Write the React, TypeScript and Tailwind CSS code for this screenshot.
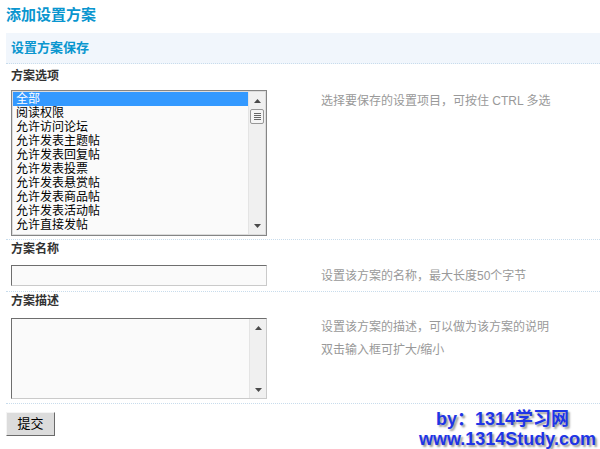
const options = [
  '全部',
  '阅读权限',
  '允许访问论坛',
  '允许发表主题帖',
  '允许发表回复帖',
  '允许发表投票',
  '允许发表悬赏帖',
  '允许发表商品帖',
  '允许发表活动帖',
  '允许直接发帖',
];

function UpArrow() {
  return (
    <svg width="7" height="4" viewBox="0 0 7 4">
      <path d="M0 4L3.5 0L7 4Z" fill="#4a4a4a" />
    </svg>
  );
}

function DownArrow() {
  return (
    <svg width="7" height="4" viewBox="0 0 7 4">
      <path d="M0 0L3.5 4L7 0Z" fill="#4a4a4a" />
    </svg>
  );
}

function ScrollBar({ thumb }: { thumb?: boolean }) {
  return (
    <div className="flex h-full w-[17px] shrink-0 flex-col border-l border-[#e4e4e4] bg-[#f0f0f0]">
      <div className="flex h-[17px] items-center justify-center">
        <UpArrow />
      </div>
      {thumb && (
        <div className="mx-px flex h-[15px] flex-col items-center justify-center gap-px rounded-[2px] border border-[#979797] bg-[#f5f5f5]">
          <div className="h-px w-[7px] bg-[#666]" />
          <div className="h-px w-[7px] bg-[#666]" />
          <div className="h-px w-[7px] bg-[#666]" />
          <div className="h-px w-[7px] bg-[#666]" />
        </div>
      )}
      <div className="flex-1" />
      <div className="flex h-[17px] items-center justify-center">
        <DownArrow />
      </div>
    </div>
  );
}

export default function App() {
  return (
    <div className="h-[449px] w-[600px] overflow-hidden bg-white font-['Liberation_Sans','Noto_Sans_CJK_SC',sans-serif] text-[12px] text-[#333]">
      <h1 className="h-[33px] pl-[6px] pt-[6px] text-[15px] font-bold leading-[18px] text-[#0a96cf]">添加设置方案</h1>

      <div className="ml-[6px]">
        <div className="h-[31px] border-b border-dotted border-[#c8dcec] bg-[#f1f6fc] pl-[5px] pt-[7px] text-[13px] font-bold leading-[15px] text-[#0a96cf]">
          设置方案保存
        </div>

        {/* 方案选项 */}
        <div className="border-b border-dotted border-[#c8dcec] pb-[3px]">
          <div className="pl-[5px] pt-[5px] font-bold leading-[14px]">方案选项</div>
          <div className="mt-[7px] flex">
            <div className="w-[315px] pl-[5px]">
              <div className="flex h-[146px] w-[256px] border border-[#858585] bg-[#dcdcdc] p-px">
                <div className="flex-1 overflow-hidden bg-[#fafafa] leading-[14px] text-black">
                  {options.map((o, i) => (
                    <div key={o} className={i === 0 ? 'bg-[#3399ff] pl-[3px] text-white' : 'pl-[3px]'}>
                      {o}
                    </div>
                  ))}
                </div>
                <ScrollBar thumb />
              </div>
            </div>
            <p className="leading-[22px] text-[#999]">选择要保存的设置项目，可按住 CTRL 多选</p>
          </div>
        </div>

        {/* 方案名称 */}
        <div className="border-b border-dotted border-[#c8dcec] pb-[4px]">
          <div className="pl-[5px] pt-[2px] font-bold leading-[14px]">方案名称</div>
          <div className="mt-[9px] flex">
            <div className="w-[315px] pl-[5px]">
              <div className="h-[21px] w-[256px] border border-b-[#cacaca] border-l-[#6e6e6e] border-r-[#cacaca] border-t-[#6e6e6e] bg-[#fafafa]" />
            </div>
            <p className="leading-[22px] text-[#999]">设置该方案的名称，最大长度50个字节</p>
          </div>
        </div>

        {/* 方案描述 */}
        <div className="border-b border-dotted border-[#c8dcec] pb-[4px]">
          <div className="pl-[5px] pt-[2px] font-bold leading-[14px]">方案描述</div>
          <div className="mt-[10px] flex">
            <div className="w-[315px] pl-[5px]">
              <div className="flex h-[81px] w-[256px] border border-b-[#cacaca] border-l-[#6e6e6e] border-r-[#cacaca] border-t-[#6e6e6e] bg-[#fafafa]">
                <div className="flex-1" />
                <ScrollBar />
              </div>
            </div>
            <p className="-mt-[2px] leading-[23px] text-[#999]">
              设置该方案的描述，可以做为该方案的说明
              <br />
              双击输入框可扩大/缩小
            </p>
          </div>
        </div>

        <div className="flex items-start justify-between">
          <button className="mt-[8px] h-[24px] w-[49px] border border-b-[#6a6a6a] border-l-[#f4f4f4] border-r-[#6a6a6a] border-t-[#f4f4f4] bg-[#dcdcdc] text-[13px] text-black">
            提交
          </button>
          <div className="mr-[4px] mt-[5px] flex flex-col items-end text-[18px] font-bold leading-[20px] text-[#1e35e6] [text-shadow:2px_2px_2px_#9a9a9a]">
            <span className="mr-[27px]">by：1314学习网</span>
            <span>www.1314Study.com</span>
          </div>
        </div>
      </div>
    </div>
  );
}
